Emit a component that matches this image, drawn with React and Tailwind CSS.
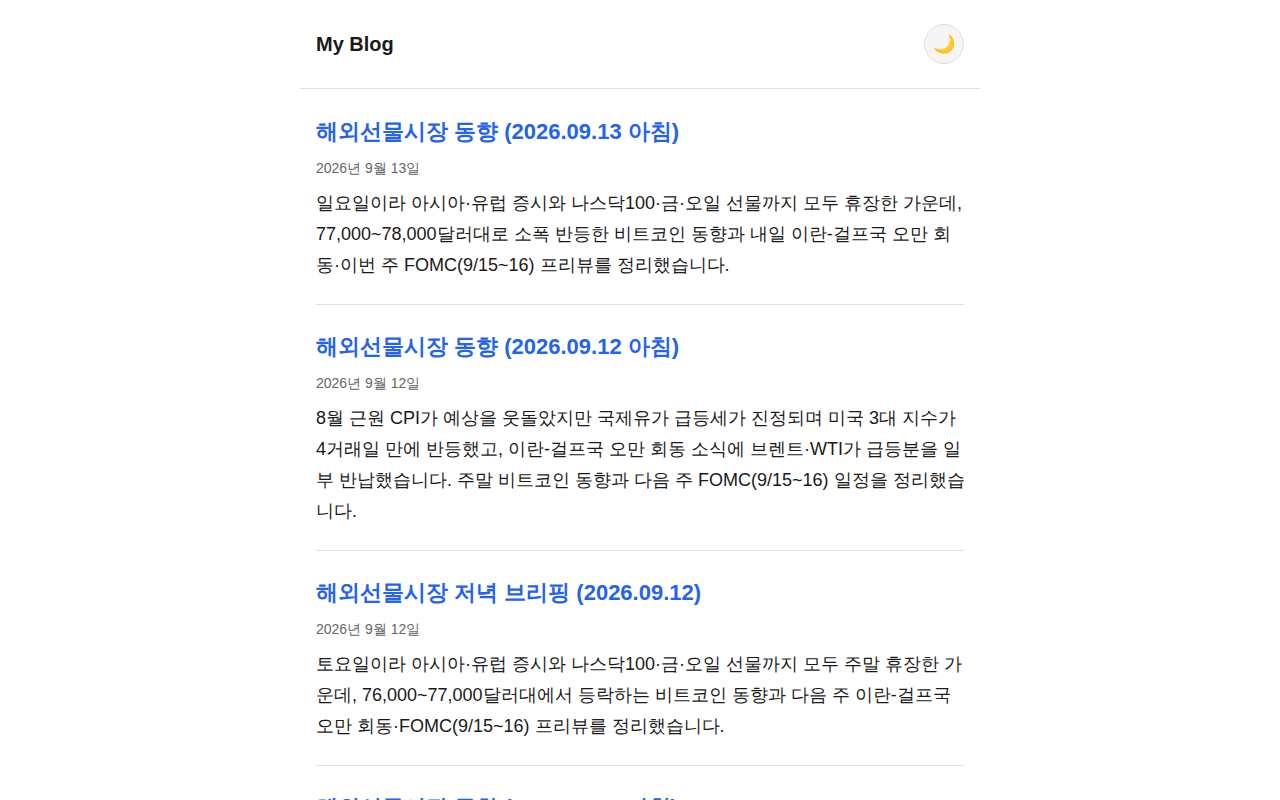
const posts = [
  {
    title: "해외선물시장 동향 (2026.09.13 아침)",
    date: "2026년 9월 13일",
    dateTime: "2026-09-13",
    summary:
      "일요일이라 아시아·유럽 증시와 나스닥100·금·오일 선물까지 모두 휴장한 가운데, 77,000~78,000달러대로 소폭 반등한 비트코인 동향과 내일 이란-걸프국 오만 회동·이번 주 FOMC(9/15~16) 프리뷰를 정리했습니다.",
  },
  {
    title: "해외선물시장 동향 (2026.09.12 아침)",
    date: "2026년 9월 12일",
    dateTime: "2026-09-12",
    summary:
      "8월 근원 CPI가 예상을 웃돌았지만 국제유가 급등세가 진정되며 미국 3대 지수가 4거래일 만에 반등했고, 이란-걸프국 오만 회동 소식에 브렌트·WTI가 급등분을 일부 반납했습니다. 주말 비트코인 동향과 다음 주 FOMC(9/15~16) 일정을 정리했습니다.",
  },
  {
    title: "해외선물시장 저녁 브리핑 (2026.09.12)",
    date: "2026년 9월 12일",
    dateTime: "2026-09-12",
    summary:
      "토요일이라 아시아·유럽 증시와 나스닥100·금·오일 선물까지 모두 주말 휴장한 가운데, 76,000~77,000달러대에서 등락하는 비트코인 동향과 다음 주 이란-걸프국 오만 회동·FOMC(9/15~16) 프리뷰를 정리했습니다.",
  },
  {
    title: "해외선물시장 동향 (2026.09.11 아침)",
  },
];

function Header() {
  return (
    <header className="flex items-center justify-between border-b border-[#e0e0e0] px-4 py-6">
      <a href="#" className="text-xl font-bold">
        My Blog
      </a>
      <button
        type="button"
        aria-label="다크 모드 전환"
        className="flex size-10 items-center justify-center rounded-full border border-[#e0e0e0] bg-[#f5f5f5] text-lg"
      >
        🌙
      </button>
    </header>
  );
}

function Post({ title, date, dateTime, summary }) {
  return (
    <article className="border-b border-[#e0e0e0] pt-6 pb-[23px]">
      <h2 className="text-[22px] leading-9 font-bold">
        <a href="#" className="text-[#2563eb]">
          {title}
        </a>
      </h2>
      {date && (
        <time dateTime={dateTime} className="mt-1.5 block text-sm leading-6 text-[#666]">
          {date}
        </time>
      )}
      {summary && <p className="mt-2 -mr-0.5 text-lg leading-[31px]">{summary}</p>}
    </article>
  );
}

export default function App() {
  return (
    <div
      lang="ko"
      className="min-h-screen bg-white font-['Liberation_Sans',sans-serif] text-[#1a1a1a]"
    >
      <div className="mx-auto max-w-[680px]">
        <Header />
        <main className="px-4 pt-px">
          {posts.map((post) => (
            <Post key={post.title} {...post} />
          ))}
        </main>
      </div>
    </div>
  );
}
